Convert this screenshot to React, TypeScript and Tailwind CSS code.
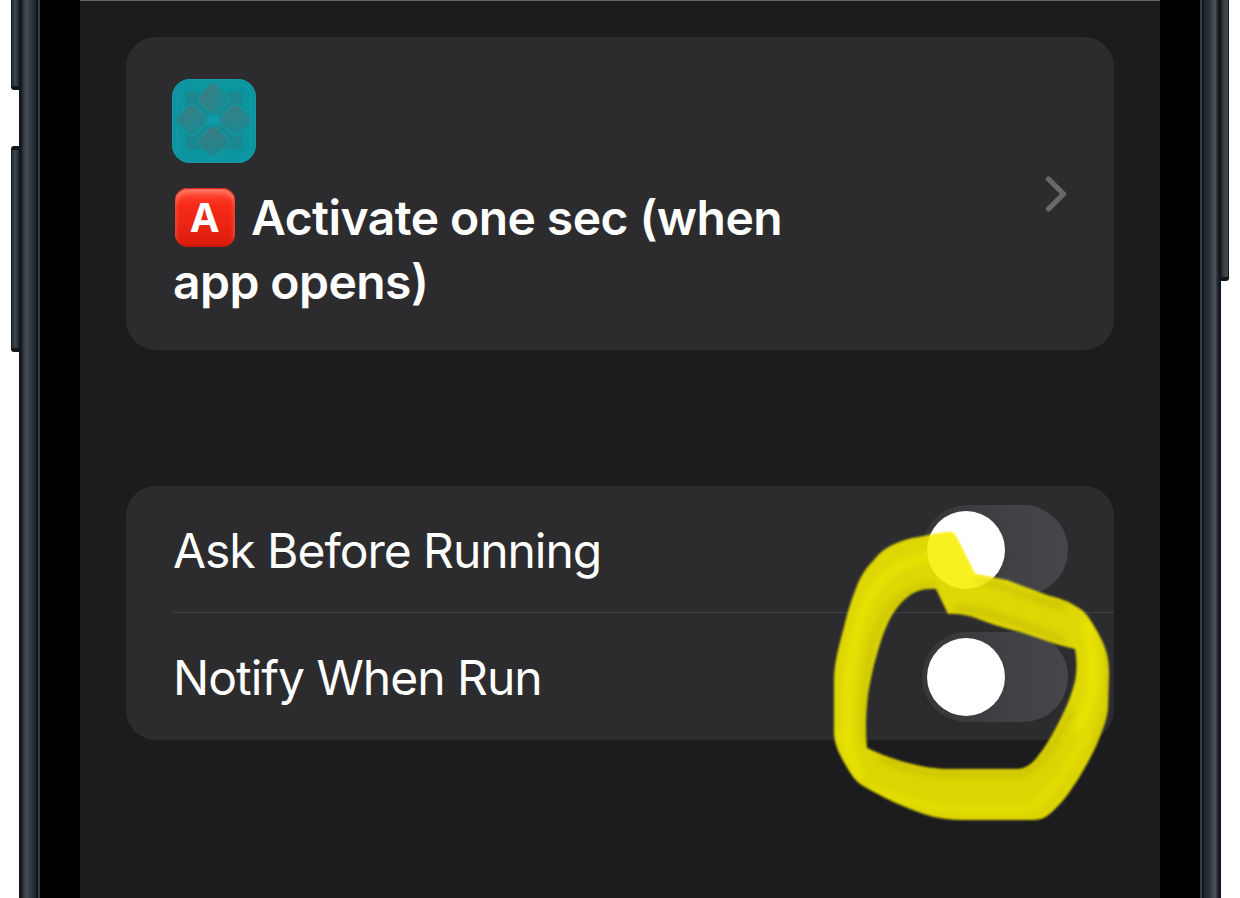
import React from "react";

const screenFont = "font-[Inter,'Liberation_Sans',sans-serif]";

const petal = (cx: number, cy: number) =>
  `M${cx - 4} ${cy - 14} Q${cx} ${cy - 18} ${cx + 4} ${cy - 14} L${cx + 14} ${cy - 4} Q${cx + 18} ${cy} ${cx + 14} ${cy + 4} L${cx + 4} ${cy + 14} Q${cx} ${cy + 18} ${cx - 4} ${cy + 14} L${cx - 14} ${cy + 4} Q${cx - 18} ${cy} ${cx - 14} ${cy - 4} Z`;

function AutomationIcon() {
  return (
    <svg width="84" height="84" viewBox="0 0 84 84" className="block">
      <defs>
        <linearGradient id="petalTop" x1="0.2" y1="0.5" x2="0.9" y2="0.7">
          <stop offset="0" stopColor="#387f85" />
          <stop offset="1" stopColor="#1a8a92" />
        </linearGradient>
        <linearGradient id="petalSide" x1="0.4" y1="0.1" x2="0.6" y2="1">
          <stop offset="0" stopColor="#367f85" />
          <stop offset="1" stopColor="#188a93" />
        </linearGradient>
        <linearGradient id="petalBottom" x1="0.4" y1="0" x2="0.6" y2="1">
          <stop offset="0" stopColor="#3d7a80" />
          <stop offset="0.6" stopColor="#298188" />
          <stop offset="1" stopColor="#158e97" />
        </linearGradient>
        <filter id="petalSoft">
          <feGaussianBlur stdDeviation="0.6" />
        </filter>
      </defs>
      <rect width="84" height="84" rx="18" fill="#0a95a0" />
      <rect x="0.7" y="0.7" width="82.6" height="82.6" rx="17.3" fill="none" stroke="#259fa4" strokeWidth="1" opacity=".6" />
      <g filter="url(#petalSoft)">
        <rect x="5" y="5" width="74" height="74" rx="12" fill="none" stroke="#2a9fa2" strokeWidth="1" opacity=".45" />
        <rect x="13.5" y="12.5" width="57" height="58" rx="2" fill="#1e858b" opacity=".85" />
        <g stroke="#0c9ba5" strokeOpacity=".9" strokeWidth="1.5">
          <path d={petal(41.5, 19.5)} fill="url(#petalTop)" />
          <path d={petal(41.5, 63)} fill="url(#petalBottom)" />
          <path d={petal(19.5, 41)} fill="url(#petalSide)" />
          <path d={petal(63.5, 41)} fill="url(#petalSide)" />
        </g>
        <path d="M35.500 36L41.500 36L47.500 36L47 41L49 46L41.500 45.500L34 46L36 41Z" fill="#0d9ca7" />
      </g>
    </svg>
  );
}

function Toggle() {
  return (
    <div className="flex h-[90px] w-[146px] shrink-0 items-center rounded-full bg-linear-to-r from-[#38383b] via-[#424246] via-60% to-[#464549] pl-[5px]">
      <div className="h-[78px] w-[78px] rounded-full bg-white shadow-[0_3px_14px_rgba(0,0,0,0.05)]" />
    </div>
  );
}

const ringPath =
  "M948 531 C930 534 913 536 902 540 C887 545 880 551 873 560 C863 570 859 579 855 590 C850 603 848 610 845 622 C840 642 834 660 834 680 L834 733 C835 746 840 754 845 763 C850 772 855 780 863 785 C876 792 890 800 903 805 C924 814 940 819 963 819 L1033 819 C1043 819 1048 815 1054 809 C1064 800 1070 790 1077 780 C1085 767 1091 756 1097 743 C1103 728 1108 716 1108 704 L1109 672 C1109 652 1103 641 1097 630 C1090 619 1087 611 1077 606 C1069 600 1058 597 1047 594 L1007 579 L975 573 L957 537 C954 531 952 531 948 531 Z " +
  "M936 588 L948 613 C957 612 965 614 973 616 C988 622 1003 627 1020 631 C1040 637 1056 644 1075 648 C1077 660 1077 669 1075 680 C1072 692 1068 702 1063 713 C1056 727 1052 735 1044 747 C1035 760 1028 768 1017 768 L953 768 C929 769 897 761 867 747 C865 729 866 710 868 693 C871 674 875 659 880 643 C885 627 891 613 900 603 C911 591 921 587 936 588 Z";

function MarkerRing() {
  return (
    <svg width="300" height="310" viewBox="820 520 300 310" className="pointer-events-none absolute left-[740px] top-[520px]">
      <defs>
        <clipPath id="ringClip">
          <path d={ringPath} clipRule="evenodd" />
        </clipPath>
        <filter id="edge">
          <feGaussianBlur stdDeviation="1.2" />
        </filter>
        <filter id="streak" x="-20%" y="-20%" width="140%" height="140%">
          <feGaussianBlur stdDeviation="3.2" />
        </filter>
      </defs>
      <path d={ringPath} fillRule="evenodd" fill="#f4ec00" fillOpacity=".89" filter="url(#edge)" />
      <g clipPath="url(#ringClip)">
        <g fill="none" filter="url(#streak)" opacity=".32">
          <path d="M936 585C903 585 886 605 876 632C867 660 863 700 864 740" stroke="#a8a000" strokeWidth="6" />
          <path d="M930 556C888 562 870 585 859 622C846 670 846 710 849 755L862 778" stroke="#fffa00" strokeWidth="10" />
          <path d="M880 757C905 769 935 773 960 773H1020C1042 768 1056 739 1072 710" stroke="#a8a000" strokeWidth="6" />
          <path d="M872 785C900 799 930 807 960 808H1025C1048 800 1064 772 1088 733" stroke="#fffa00" strokeWidth="6" />
          <path d="M975 578C1005 585 1025 596 1065 606" stroke="#a8a000" strokeWidth="6" />
          <path d="M954 608C985 607 1025 625 1065 640" stroke="#a8a000" strokeWidth="7" />
          <path d="M1086 620L1092 650V690L1078 730" stroke="#fffa00" strokeWidth="12" />
          <path d="M1107 650V705L1092 750" stroke="#a8a000" strokeWidth="4" />
          <path d="M842 730L856 768" stroke="#fffa00" strokeWidth="12" />
        </g>
        <circle cx="966" cy="549" r="38.500" fill="#fff62a" opacity=".35" />
      </g>
    </svg>
  );
}

export default function App() {
  return (
    <div className={`flex h-[898px] w-[1240px] overflow-hidden bg-white ${screenFont}`}>
      <div className="flex w-[19px] shrink-0 flex-col items-end">
        <div className="h-[90px] w-2 rounded-bl-[3px] border-b-[4px] border-l border-[#10161a] bg-linear-to-r from-[#293137] via-[#3c4449] to-[#20272d]" />
        <div className="mt-14 h-[206px] w-2 rounded-l-[3px] border-y-[4px] border-l border-[#10161a] bg-linear-to-r from-[#293137] via-[#3c4449] to-[#20272d]" />
      </div>
      <div className="w-[19px] shrink-0 bg-[linear-gradient(90deg,#10161a_0,#10161a_2px,#2b3238_4px,#434a51_7px,#3a4148_10px,#292f37_14px,#1e242c_17px,#080a0d_19px)]" />
      <div className="w-[2px] shrink-0 bg-[#3d3d3d]" />
      <div className="w-10 shrink-0 bg-black" />

      <main className="relative flex h-full w-[1080px] shrink-0 flex-col border-t border-[#626364] bg-[#1c1c1e] px-[46px] pt-9 text-white">
        <section className="flex h-[313px] w-[988px] shrink-0 items-center justify-between rounded-[30px] bg-[#2c2c2e] pl-[46px] pr-[46px]">
          <div className="h-full pt-[42px]">
            <AutomationIcon />
            <h1 className="mt-[23px] text-[48px] font-semibold leading-[64px] tracking-[-0.55px]">
              <span className="flex items-center whitespace-nowrap">
                <span className="mb-px ml-[3px] mr-[16px] flex h-[59px] w-[60px] items-center justify-center rounded-[13px] bg-linear-to-b from-[#ff4934] via-[#f72a18] via-30% to-[#dc1c0c] pr-px text-[40px] font-bold shadow-[inset_0_1px_1px_#d61b0f,inset_0_5px_5px_#ff7d68,inset_0_-2px_2px_#c41c0e]">
                  A
                </span>
                <span>Activate one sec (when</span>
              </span>
              <span className="block pl-px">app opens)</span>
            </h1>
          </div>
          <svg width="24" height="38" viewBox="0 0 24 38" fill="none">
            <path d="M4.500 4L19.500 19L4.500 34" stroke="#69696c" strokeWidth="5.300" strokeLinecap="round" strokeLinejoin="round" />
          </svg>
        </section>

        <section className="mt-[136px] flex h-[254px] w-[988px] shrink-0 flex-col rounded-[30px] bg-[#2c2c2e] pl-[46px]">
          <div className="flex h-[127px] items-center justify-between border-b border-[#404043] pr-[46px] pt-[2px]">
            <span className="pl-px pt-px text-[48px] leading-[60px] tracking-[-1.05px]">Ask Before Running</span>
            <Toggle />
          </div>
          <div className="flex h-[127px] items-center justify-between pr-[46px]">
            <span className="pl-px pt-[2px] text-[48px] leading-[60px] tracking-[-1px]">Notify When Run</span>
            <Toggle />
          </div>
        </section>
        <MarkerRing />
      </main>

      <div className="w-10 shrink-0 bg-black" />
      <div className="w-[2px] shrink-0 bg-[#3d3d3d]" />
      <div className="w-[19px] shrink-0 bg-[linear-gradient(270deg,#10161a_0,#10161a_2px,#2b3238_4px,#4d545a_6px,#3c434a_9px,#292f37_12px,#1e242c_17px,#080a0d_19px)]" />
      <div className="h-[281px] w-2 shrink-0 rounded-br-[3px] border-b-[4px] border-r border-[#10161a] bg-linear-to-r from-[#20272d] via-[#3a4147] to-[#454c51]" />
    </div>
  );
}
